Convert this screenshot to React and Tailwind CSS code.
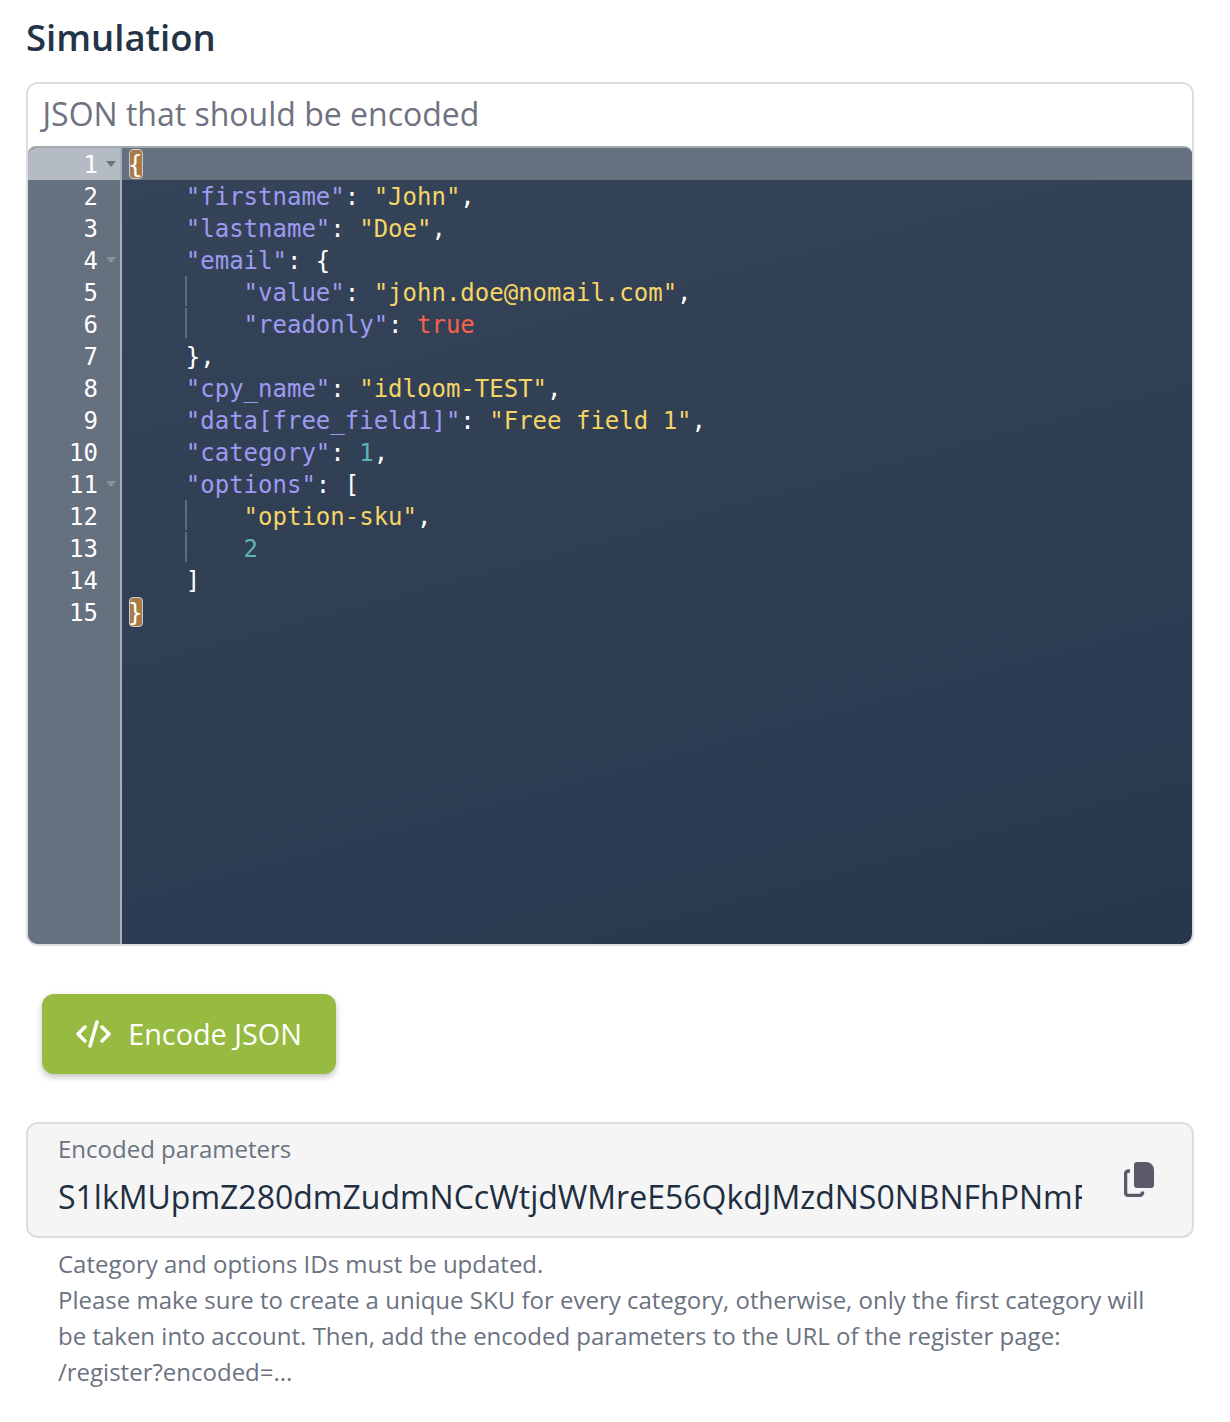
import React from "react";

const K = ({ children }) => <span className="text-[#9d9bf0]">{children}</span>;
const S = ({ children }) => <span className="text-[#f5d565]">{children}</span>;
const N = ({ children }) => <span className="text-[#5fb3b3]">{children}</span>;

const Guide = () => (
  <span className="absolute left-[63px] top-0 h-[30px] w-[2px] bg-[#5f6b7b]" />
);

const Bracket = ({ children }) => (
  <span className="relative inline-block h-[31px] w-[14.45px]">
    <span className="absolute left-[1px] top-0 h-[30px] w-[14px] rounded-[4px] border border-[#c8ccd2] bg-[#a97c45]" />
    <span className="relative">{children}</span>
  </span>
);

const lines = [
  { fold: true, active: true, code: <Bracket>{"{"}</Bracket> },
  { code: <>{"    "}<K>"firstname"</K>: <S>"John"</S>,</> },
  { code: <>{"    "}<K>"lastname"</K>: <S>"Doe"</S>,</> },
  { fold: true, code: <>{"    "}<K>"email"</K>: {"{"}</> },
  { guide: true, code: <>{"        "}<K>"value"</K>: <S>"john.doe@nomail.com"</S>,</> },
  { guide: true, code: <>{"        "}<K>"readonly"</K>: <span className="text-[#f9614c]">true</span></> },
  { code: <>{"    "}{"},"}</> },
  { code: <>{"    "}<K>"cpy_name"</K>: <S>"idloom-TEST"</S>,</> },
  { code: <>{"    "}<K>"data[free_field1]"</K>: <S>"Free field 1"</S>,</> },
  { code: <>{"    "}<K>"category"</K>: <N>1</N>,</> },
  { fold: true, code: <>{"    "}<K>"options"</K>: [</> },
  { guide: true, code: <>{"        "}<S>"option-sku"</S>,</> },
  { guide: true, code: <>{"        "}<N>2</N></> },
  { code: <>{"    "}]</> },
  { code: <Bracket>{"}"}</Bracket> },
];

const App = () => {
  return (
    <div className="h-[1422px] w-[1230px] bg-white pl-[26px] pr-[36px] pt-[13px] font-['Open_Sans',sans-serif]">
      <h1 className="text-[36.5px] font-semibold leading-[48px] text-[#243447]">
        Simulation
      </h1>

      <div className="mt-[21px] overflow-hidden rounded-[12px] border-2 border-[#dcdce2]">
        <div className="h-[62px] bg-white pl-[14.5px] pt-[8px] text-[32px] leading-[44px] text-[#6f7280]">
          JSON that should be encoded
        </div>
        <div className="relative flex h-[798px] flex-col overflow-hidden rounded-[8px] border-t-2 border-[#a0a8b0] bg-[linear-gradient(165deg,#364459_0%,#2c3b51_80%,#273648_100%)] font-['DejaVu_Sans_Mono',monospace] text-[24px] leading-[32px] text-white">
          {lines.map((line, i) => (
            <div key={i} className={`flex h-[32px] ${line.active ? "bg-[#667180]" : ""}`}>
              <div
                className={`relative h-[32px] w-[94px] shrink-0 border-r-2 border-[#a8afb7] pr-[22px] pt-[1px] text-right ${
                  line.active ? "bg-[#b4bbc2]" : "bg-[#667180]"
                }`}
              >
                {i + 1}
                {line.fold && (
                  <span
                    className={`absolute right-[4px] top-[13px] h-0 w-0 border-x-[5px] border-t-[6px] border-x-transparent ${
                      line.active ? "border-t-[#6b7280]" : "border-t-[#8a929d]"
                    }`}
                  />
                )}
              </div>
              <div className="relative flex-1 whitespace-pre pl-[6px] pt-[1px]">
                {line.guide && <Guide />}
                {line.code}
              </div>
            </div>
          ))}
          <div className="flex flex-1">
            <div className="w-[94px] shrink-0 border-r-2 border-[#a8afb7] bg-[#667180]" />
          </div>
        </div>
      </div>

      <button className="ml-[16px] mt-[48px] flex h-[80px] w-[294px] items-center justify-center gap-[17px] rounded-[12px] bg-[#97bb41] text-[28.8px] text-white shadow-[0_3px_6px_rgba(0,0,0,0.25)]">
        <svg width="35" height="28" viewBox="0 0 35 28" fill="none" stroke="white" strokeWidth="3.5" strokeLinecap="round" strokeLinejoin="round">
          <path d="M9 7 L2 14 L9 21" />
          <path d="M26 7 L33 14 L26 21" />
          <path d="M21 2 L14 26" />
        </svg>
        Encode JSON
      </button>

      <div className="mt-[48px] flex h-[116px] items-start justify-between rounded-[12px] border-2 border-[#dcdce2] bg-[#f5f5f5] pl-[30px] pr-[38px] pt-[9px]">
        <div className="w-[1024px] overflow-hidden">
          <div className="text-[24px] leading-[32px] text-[#6b7280]">Encoded parameters</div>
          <div className="mt-[10px] whitespace-nowrap text-[32px] leading-[44px] text-[#1f2f42]">
            S1lkMUpmZ280dmZudmNCcWtjdWMreE56QkdJMzdNS0NBNFhPNmFyY2Q0dmZ1
          </div>
        </div>
        <svg width="30" height="35" viewBox="0 0 30 35" className="mt-[29px] shrink-0">
          <path d="M10 3 a3 3 0 0 1 3-3 h9 a8 8 0 0 1 8 8 v15 a3 3 0 0 1-3 3 H13 a3 3 0 0 1-3-3z" fill="#5a5a6b" />
          <path d="M6 9 H4.5 a3 3 0 0 0-3 3 v18.5 a3 3 0 0 0 3 3 h11 a3 3 0 0 0 3-3 v-1" fill="none" stroke="#5a5a6b" strokeWidth="3.5" />
        </svg>
      </div>

      <div className="mt-[8px] pl-[32px] pr-[40px] text-[24px] leading-[36px] text-[#6b7280]">
        <p>Category and options IDs must be updated.</p>
        <p>
          Please make sure to create a unique SKU for every category, otherwise, only the first category will be taken into account. Then, add the encoded parameters to the URL of the register page:{" "}
          <span className="whitespace-nowrap">/register?encoded=...</span>
        </p>
      </div>
    </div>
  );
};

export default App;
